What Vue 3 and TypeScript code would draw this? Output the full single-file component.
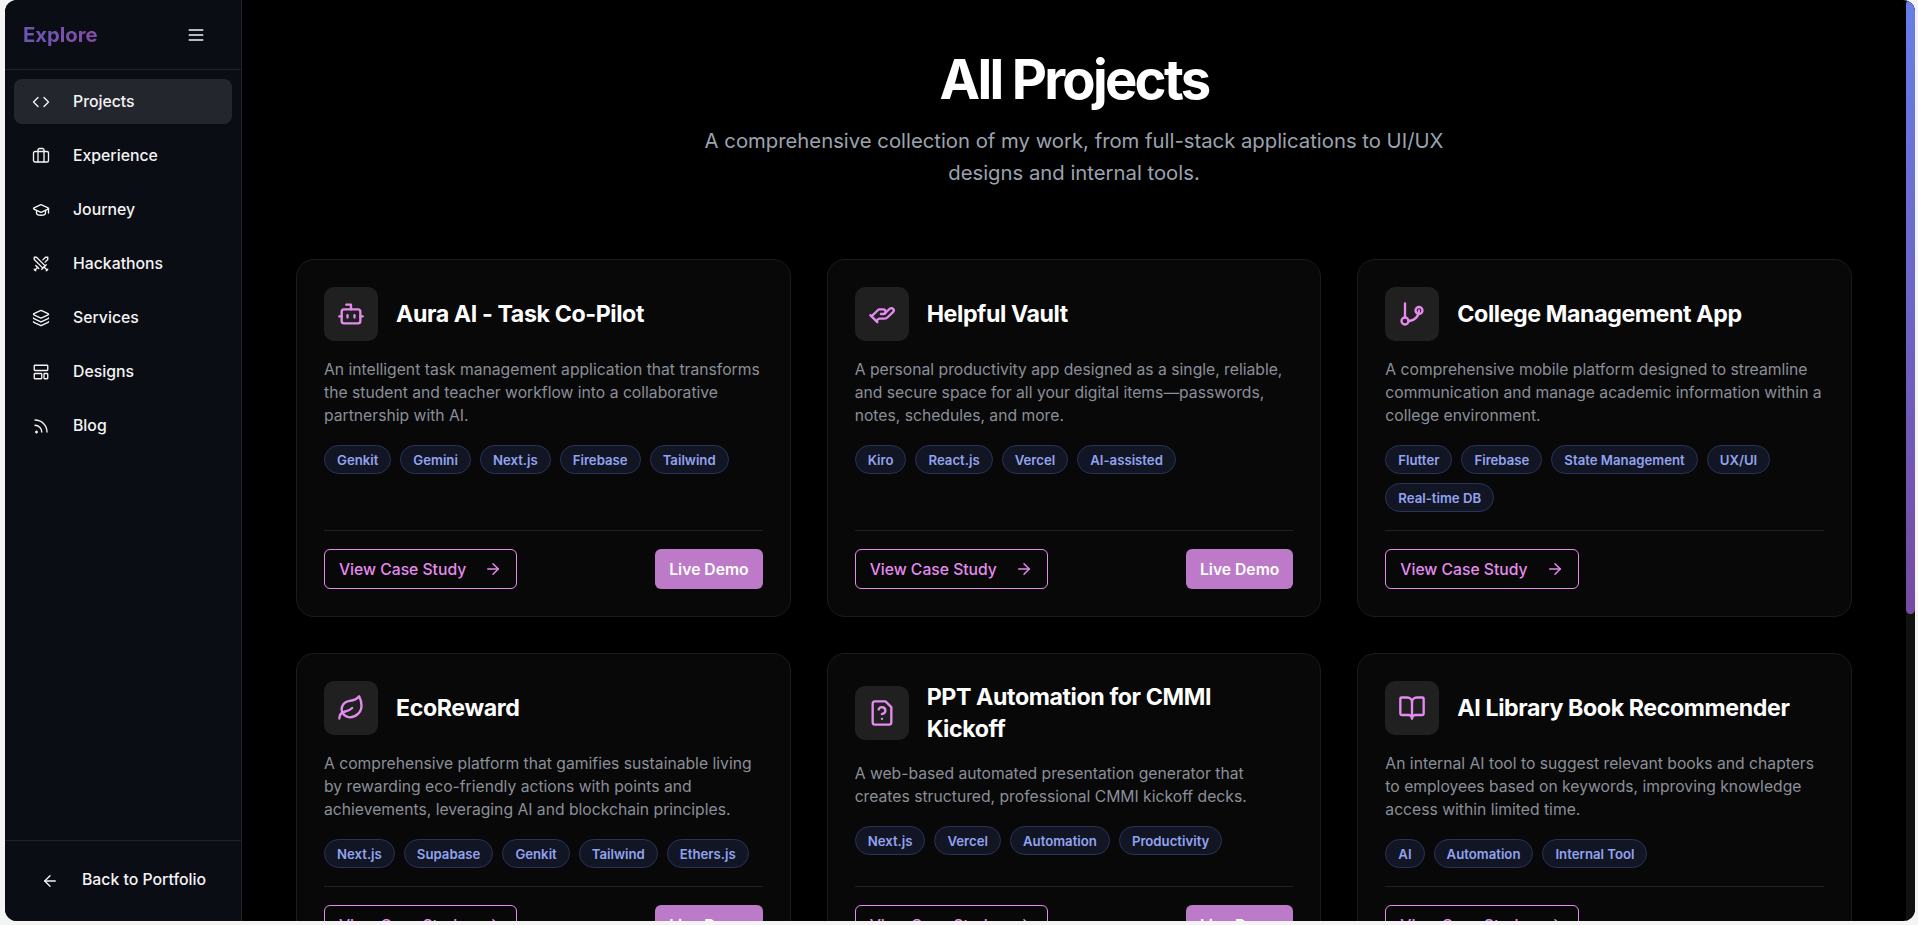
<script setup lang="ts">
interface Project {
  title: string
  icon: string
  desc: string
  tags: string[]
  demo: boolean
}

const nav = [
  { label: 'Projects', icon: 'code' },
  { label: 'Experience', icon: 'briefcase' },
  { label: 'Journey', icon: 'cap' },
  { label: 'Hackathons', icon: 'swords' },
  { label: 'Services', icon: 'layers' },
  { label: 'Designs', icon: 'layout' },
  { label: 'Blog', icon: 'rss' }
]

const navIcons: Record<string, string[]> = {
  code: ['m16 18 6-6-6-6', 'm8 6-6 6 6 6'],
  briefcase: ['M16 20V4a2 2 0 0 0-2-2h-4a2 2 0 0 0-2 2v16', 'M4 6h16a2 2 0 0 1 2 2v10a2 2 0 0 1-2 2H4a2 2 0 0 1-2-2V8a2 2 0 0 1 2-2z'],
  cap: ['M21.42 10.92a1 1 0 0 0-.02-1.84L12.83 5.18a2 2 0 0 0-1.66 0L2.6 9.08a1 1 0 0 0 0 1.83l8.57 3.91a2 2 0 0 0 1.66 0z', 'M22 10v6', 'M6 12.5V16a6 3 0 0 0 12 0v-3.5'],
  swords: ['M14.5 17.5 3 6V3h3l11.5 11.5', 'm13 19 6-6', 'm16 16 4 4', 'm19 21 2-2', 'M14.5 6.5 18 3h3v3l-3.5 3.5', 'm5 14 4 4', 'm7 17-3 3', 'm3 19 2 2'],
  layers: ['M12.83 2.18a2 2 0 0 0-1.66 0L2.6 6.08a1 1 0 0 0 0 1.83l8.58 3.91a2 2 0 0 0 1.66 0l8.58-3.9a1 1 0 0 0 0-1.83z', 'M2 12a1 1 0 0 0 .58.91l8.6 3.91a2 2 0 0 0 1.65 0l8.58-3.9A1 1 0 0 0 22 12', 'M2 17a1 1 0 0 0 .58.91l8.6 3.91a2 2 0 0 0 1.65 0l8.58-3.9A1 1 0 0 0 22 17'],
  layout: ['M4 3h16a1 1 0 0 1 1 1v5a1 1 0 0 1-1 1H4a1 1 0 0 1-1-1V4a1 1 0 0 1 1-1z', 'M4 14h8a1 1 0 0 1 1 1v5a1 1 0 0 1-1 1H4a1 1 0 0 1-1-1v-5a1 1 0 0 1 1-1z', 'M17 14h3a1 1 0 0 1 1 1v5a1 1 0 0 1-1 1h-3a1 1 0 0 1-1-1v-5a1 1 0 0 1 1-1z'],
  rss: ['M4 11a9 9 0 0 1 9 9', 'M4 4a16 16 0 0 1 16 16', 'M5 20a1 1 0 1 0 0-.01z']
}

const projectIcons: Record<string, string[]> = {
  bot: ['M12 8V4H8', 'M6 8h12a2 2 0 0 1 2 2v8a2 2 0 0 1-2 2H6a2 2 0 0 1-2-2v-8a2 2 0 0 1 2-2z', 'M2 14h2', 'M20 14h2', 'M15 13v2', 'M9 13v2'],
  hand: ['M11 12h2a2 2 0 1 0 0-4h-3c-.6 0-1.1.2-1.4.6L3 14', 'm7 18 1.6-1.4c.3-.4.8-.6 1.4-.6h4c1.1 0 2.1-.4 2.8-1.2l4.6-4.4a2 2 0 0 0-2.75-2.91l-4.2 3.9', 'm2 13 6 6'],
  branch: ['M6 3v12', 'M18 6a3 3 0 1 0 0 6 3 3 0 0 0 0-6z', 'M6 15a3 3 0 1 0 0 6 3 3 0 0 0 0-6z', 'M18 9a9 9 0 0 1-9 9'],
  leaf: ['M11 20A7 7 0 0 1 9.8 6.1C15.5 5 17 4.48 19 2c1 2 2 4.18 2 8 0 5.5-4.78 10-10 10Z', 'M2 21c0-3 1.85-5.36 5.08-6C9.5 14.52 12 13 13 12'],
  file: ['M15 2H6a2 2 0 0 0-2 2v16a2 2 0 0 0 2 2h12a2 2 0 0 0 2-2V7z', 'M9.1 9a3 3 0 0 1 5.82 1c0 2-3 3-3 3', 'M12 17h.01'],
  book: ['M12 7v14', 'M3 18a1 1 0 0 1-1-1V4a1 1 0 0 1 1-1h5a4 4 0 0 1 4 4 4 4 0 0 1 4-4h5a1 1 0 0 1 1 1v13a1 1 0 0 1-1 1h-6a3 3 0 0 0-3 3 3 3 0 0 0-3-3z']
}

const projects: Project[] = [
  {
    title: 'Aura AI - Task Co-Pilot',
    icon: 'bot',
    desc: 'An intelligent task management application that transforms the student and teacher workflow into a collaborative partnership with AI.',
    tags: ['Genkit', 'Gemini', 'Next.js', 'Firebase', 'Tailwind'],
    demo: true
  },
  {
    title: 'Helpful Vault',
    icon: 'hand',
    desc: 'A personal productivity app designed as a single, reliable, and secure space for all your digital items—passwords, notes, schedules, and more.',
    tags: ['Kiro', 'React.js', 'Vercel', 'AI-assisted'],
    demo: true
  },
  {
    title: 'College Management App',
    icon: 'branch',
    desc: 'A comprehensive mobile platform designed to streamline communication and manage academic information within a college environment.',
    tags: ['Flutter', 'Firebase', 'State Management', 'UX/UI', 'Real-time DB'],
    demo: false
  },
  {
    title: 'EcoReward',
    icon: 'leaf',
    desc: 'A comprehensive platform that gamifies sustainable living by rewarding eco-friendly actions with points and achievements, leveraging AI and blockchain principles.',
    tags: ['Next.js', 'Supabase', 'Genkit', 'Tailwind', 'Ethers.js'],
    demo: true
  },
  {
    title: 'PPT Automation for CMMI Kickoff',
    icon: 'file',
    desc: 'A web-based automated presentation generator that creates structured, professional CMMI kickoff decks.',
    tags: ['Next.js', 'Vercel', 'Automation', 'Productivity'],
    demo: true
  },
  {
    title: 'AI Library Book Recommender',
    icon: 'book',
    desc: 'An internal AI tool to suggest relevant books and chapters to employees based on keywords, improving knowledge access within limited time.',
    tags: ['AI', 'Automation', 'Internal Tool'],
    demo: false
  }
]
</script>

<template>
  <div class="frame">
    <aside class="sidebar">
      <div class="brand">
        <span class="brand-name">Explore</span>
        <svg class="menu" viewBox="0 0 24 24" fill="none" stroke="currentColor" stroke-width="2" stroke-linecap="round">
          <path d="M4 6h16M4 12h16M4 18h16" />
        </svg>
      </div>
      <nav class="nav">
        <a v-for="(item, i) in nav" :key="item.label" class="nav-item" :class="{ active: i === 0 }">
          <svg class="nav-icon" viewBox="0 0 24 24" fill="none" stroke="currentColor" stroke-linecap="round" stroke-linejoin="round">
            <path v-for="d in navIcons[item.icon]" :key="d" :d="d" />
          </svg>
          <span class="nav-label">{{ item.label }}</span>
        </a>
      </nav>
      <div class="back">
        <svg class="nav-icon" viewBox="0 0 24 24" fill="none" stroke="currentColor" stroke-linecap="round" stroke-linejoin="round">
          <path d="m12 19-7-7 7-7" />
          <path d="M19 12H5" />
        </svg>
        <span class="back-label">Back to Portfolio</span>
      </div>
    </aside>

    <main class="main">
      <header class="intro">
        <h1>All Projects</h1>
        <p>A comprehensive collection of my work, from full-stack applications to UI/UX designs and internal tools.</p>
      </header>
      <section class="grid">
        <article v-for="p in projects" :key="p.title" class="card">
          <div class="card-head">
            <div class="icon-box">
              <svg viewBox="0 0 24 24" fill="none" stroke="currentColor" stroke-width="2" stroke-linecap="round" stroke-linejoin="round">
                <path v-for="d in projectIcons[p.icon]" :key="d" :d="d" />
              </svg>
            </div>
            <h2>{{ p.title }}</h2>
          </div>
          <p class="desc">{{ p.desc }}</p>
          <div class="tags">
            <span v-for="t in p.tags" :key="t" class="tag">{{ t }}</span>
          </div>
          <div class="actions">
            <a class="btn-outline">
              View Case Study
              <svg viewBox="0 0 24 24" fill="none" stroke="currentColor" stroke-width="2" stroke-linecap="round" stroke-linejoin="round">
                <path d="M5 12h14" />
                <path d="m12 5 7 7-7 7" />
              </svg>
            </a>
            <a v-if="p.demo" class="btn-solid">Live Demo</a>
          </div>
        </article>
      </section>
      <div class="track"><div class="thumb"></div></div>
    </main>
  </div>
</template>

<style>
html,
body {
  margin: 0;
  height: 100%;
  overflow: hidden;
  background: #f4f4f5;
}
</style>

<style scoped>
.frame {
  display: flex;
  height: 921px;
  margin: 0 3px 0 5px;
  background: #000;
  border-radius: 12px;
  overflow: hidden;
  font-family: Inter, "Liberation Sans", sans-serif;
}
.sidebar {
  width: 236px;
  flex: none;
  display: flex;
  flex-direction: column;
  background: #0a0d14;
  border-right: 1px solid #1f2229;
  color: #f4f4f5;
}
.brand {
  height: 70px;
  flex: none;
  box-sizing: border-box;
  padding: 0 35px 0 18px;
  display: flex;
  align-items: center;
  justify-content: space-between;
  border-bottom: 1px solid #1f2229;
}
.brand-name {
  font-size: 20.3px;
  font-weight: 700;
  background: linear-gradient(90deg, #6a56b4, #824ea6);
  -webkit-background-clip: text;
  background-clip: text;
  color: transparent;
}
.menu {
  width: 20px;
  height: 20px;
}
.nav {
  flex: 1;
  padding: 9px 9px 0;
  display: flex;
  flex-direction: column;
  gap: 9px;
}
.nav-item {
  height: 45px;
  box-sizing: border-box;
  padding: 0 18px;
  display: flex;
  align-items: center;
  gap: 23px;
  border-radius: 8px;
  font-size: 15.8px;
  font-weight: 500;
}
.nav-item.active {
  background: #24262d;
}
.nav-label {
  margin-top: -1px;
}
.back-label {
  margin-top: -3px;
}
.nav-icon {
  width: 18px;
  height: 18px;
  flex: none;
  stroke-width: 1.8;
}
.back {
  height: 81px;
  box-sizing: border-box;
  padding: 0 20px 0 36px;
  display: flex;
  align-items: center;
  gap: 23px;
  border-top: 1px solid #1f2229;
  font-size: 15.8px;
  font-weight: 500;
}
.main {
  flex: 1;
  min-width: 0;
  position: relative;
  overflow: hidden;
  padding: 0 63px 0 54px;
}
.intro {
  padding-top: 47px;
  text-align: center;
}
.intro h1 {
  margin: 0;
  font-size: 54.4px;
  line-height: 64px;
  font-weight: 700;
  letter-spacing: -2.72px;
  color: #fff;
}
.intro p {
  width: 760px;
  margin: 14px auto 0;
  font-size: 20.3px;
  line-height: 32px;
  color: #9ca3af;
}
.grid {
  margin-top: 70px;
  display: grid;
  grid-template-columns: repeat(3, 1fr);
  gap: 36px;
}
.card {
  display: flex;
  flex-direction: column;
  box-sizing: border-box;
  padding: 27px;
  background: #080808;
  border: 1px solid #1c1c1f;
  border-radius: 18px;
}
.card-head {
  display: flex;
  align-items: center;
  gap: 18px;
  margin-bottom: 16.5px;
}
.icon-box {
  width: 54px;
  height: 54px;
  flex: none;
  display: flex;
  align-items: center;
  justify-content: center;
  background: #202020;
  border-radius: 10px;
  color: #e58bee;
}
.icon-box svg {
  width: 28px;
  height: 28px;
}
.card-head h2 {
  margin: 0;
  font-size: 23.2px;
  line-height: 32px;
  font-weight: 700;
  letter-spacing: -0.4px;
  color: #fff;
}
.desc {
  margin: 0 0 18.5px;
  font-size: 15.7px;
  line-height: 23px;
  color: #8b8f98;
}
.tags {
  display: flex;
  flex-wrap: wrap;
  gap: 9px;
  margin-bottom: 18px;
}
.tag {
  height: 29px;
  box-sizing: border-box;
  padding: 0 12px;
  display: flex;
  align-items: center;
  font-size: 13.2px;
  font-weight: 600;
  color: #93a3ee;
  background: #111524;
  border: 1px solid #2a3358;
  border-radius: 15px;
}
.actions {
  margin-top: auto;
  padding-top: 18px;
  border-top: 1px solid #212124;
  display: flex;
  justify-content: space-between;
  align-items: center;
}
.btn-outline {
  height: 40px;
  box-sizing: border-box;
  padding: 0 14px;
  display: flex;
  align-items: center;
  gap: 18px;
  border: 1px solid #e58bee;
  border-radius: 6px;
  font-size: 15.7px;
  font-weight: 500;
  color: #e58bee;
}
.btn-outline svg {
  width: 18px;
  height: 18px;
}
.btn-solid {
  height: 40px;
  box-sizing: border-box;
  padding: 0 14px;
  display: flex;
  align-items: center;
  background: #bc7ac8;
  border-radius: 6px;
  font-size: 15.7px;
  font-weight: 600;
  color: #fff;
}
.track {
  position: absolute;
  top: 0;
  right: 0;
  bottom: 0;
  width: 9px;
  background: #111;
}
.thumb {
  height: 614px;
  border-radius: 5px;
  background: linear-gradient(180deg, #667eea, #764ba2);
}
</style>
